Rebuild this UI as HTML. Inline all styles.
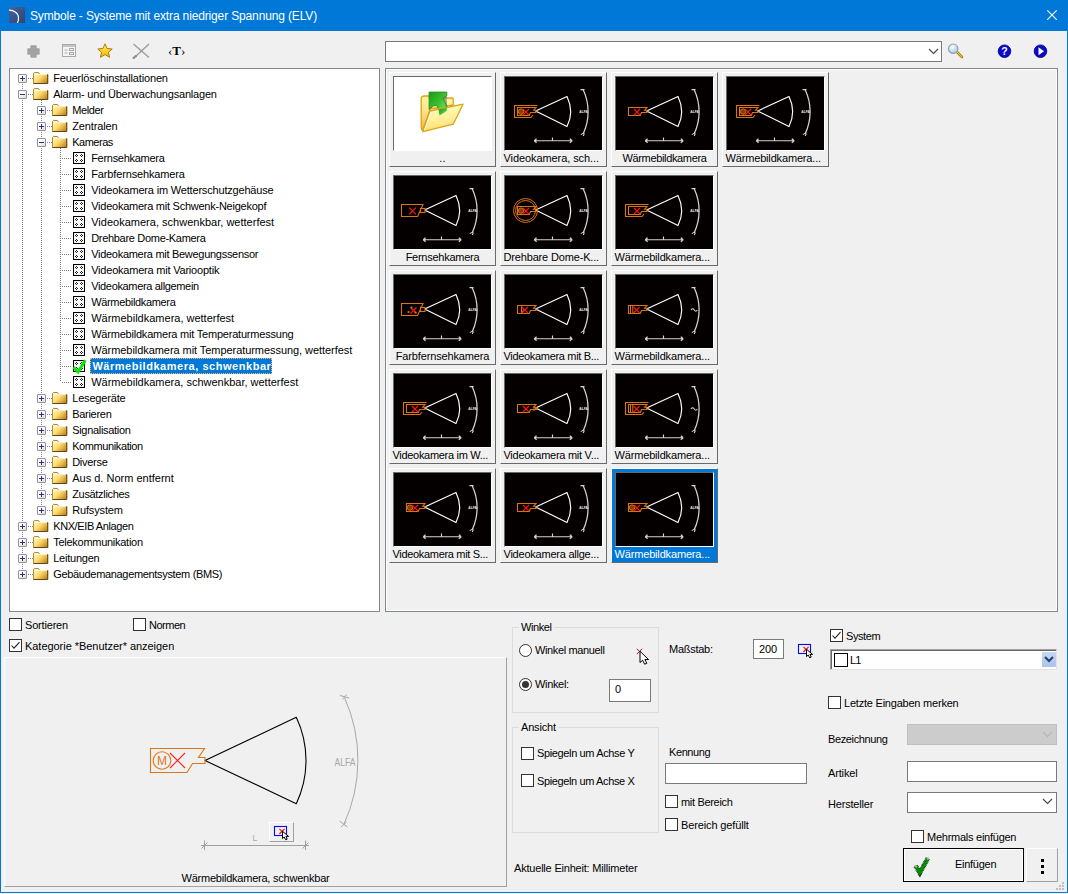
<!DOCTYPE html>
<html lang="de"><head><meta charset="utf-8"><title>Symbole - Systeme mit extra niedriger Spannung (ELV)</title>
<style>
html,body{margin:0;padding:0}
body{width:1068px;height:894px;position:relative;overflow:hidden;background:#f0f0f0;font:11px/16px "Liberation Sans",sans-serif;color:#000;-webkit-font-smoothing:auto}
.abs{position:absolute}
#frame{position:absolute;left:0;top:0;width:1066px;height:892px;border:1px solid #0078d7;border-top:none;pointer-events:none}
#title{position:absolute;left:0;top:0;width:1068px;height:31px;background:#0078d7;color:#fff;font:12px/31px "Liberation Sans",sans-serif}
#title span{position:absolute;left:30px;top:1px;white-space:nowrap;letter-spacing:0px}
.t{position:absolute;white-space:nowrap;height:16px;line-height:16px}
.box{position:absolute;background:#fff;border:1px solid #828790;box-sizing:border-box}
.row{position:absolute;left:0;height:16px;white-space:nowrap}
.lbl{position:absolute;top:0;height:16px;line-height:16px;white-space:nowrap;padding:0 2px 0 1.2px}
.vd{position:absolute;width:1px;background:repeating-linear-gradient(to bottom,#808080 0 1px,transparent 1px 2px)}
.hd{position:absolute;height:1px;background:repeating-linear-gradient(to right,#808080 0 1px,transparent 1px 2px)}
.pm{position:absolute;width:9px;height:9px;box-sizing:border-box;border:1px solid #919191;background:linear-gradient(135deg,#fff 30%,#dcdcdc);border-radius:1px}
.pm i{position:absolute;left:1px;top:3px;width:5px;height:1px;background:#26347a}
.pm b{position:absolute;left:3px;top:1px;width:1px;height:5px;background:#26347a}
.cb{position:absolute;width:13px;height:13px;box-sizing:border-box;border:1px solid #333;background:#fff}
.cell{position:absolute;width:107px;height:95px;box-sizing:border-box;border:1px solid;border-color:#fff #696969 #696969 #fff;background:#f0f0f0}
.cell .im{position:absolute;left:3px;top:3px;width:99px;height:75px;box-sizing:border-box;border:1px solid;border-color:#696969 #fff #fff #696969;background:#050000;overflow:hidden}
.cell .cap{position:absolute;left:3px;top:78px;width:99px;height:14px;line-height:14px;text-align:center;white-space:nowrap}
.cell.sel{background:#0078d7;color:#fff}
.grp{position:absolute;box-sizing:border-box;border:1px solid #dcdcdc}
.grp span{position:absolute;left:6px;top:-9px;background:#f0f0f0;padding:0 2px;line-height:16px;height:16px;white-space:nowrap}
.edit{position:absolute;box-sizing:border-box;border:1px solid #7a7a7a;background:#fff}
</style></head><body>
<div id="title"><svg class="abs" style="left:9px;top:7px" width="16" height="16" viewBox="0 0 16 16"><defs><linearGradient id="ig" x1="0" y1="0" x2="1" y2="1"><stop offset="0" stop-color="#48629c"/><stop offset="1" stop-color="#2c4474"/></linearGradient></defs><rect width="16" height="16" fill="url(#ig)"/><path d="M0 3.2 C4 3.1 9.6 5.6 9.5 11 C9.5 13 9.1 14.6 8.4 15.9" fill="none" stroke="#fff" stroke-width="1.15"/></svg><span style="letter-spacing:-0.146px;">Symbole - Systeme mit extra niedriger Spannung (ELV)</span><svg class="abs" style="left:1047px;top:10px" width="10" height="10" viewBox="0 0 10 10"><path d="M0.3 0.3 L9.7 9.7 M9.7 0.3 L0.3 9.7" stroke="#fff" stroke-width="1.1" fill="none"/></svg></div><svg class="abs" style="left:27px;top:45px" width="13" height="13" viewBox="0 0 13 13"><path d="M4 1h5v3h3v5h-3v3h-5v-3h-3v-5h3z" fill="#a2a2a2" stroke="#a2a2a2" stroke-width="1.4" stroke-linejoin="round"/></svg>
<svg class="abs" style="left:62px;top:44px" width="14" height="13" viewBox="0 0 14 13"><rect x="0.5" y="0.5" width="13" height="12" fill="#f6f6f6" stroke="#a8a8a8"/><rect x="1" y="1" width="12" height="2" fill="#c4c4c4"/><path d="M2.5 6h3M2.5 9h3" stroke="#a8a8a8"/><rect x="7.5" y="4.5" width="4" height="2" fill="none" stroke="#a8a8a8"/><rect x="7.5" y="8.5" width="4" height="2" fill="none" stroke="#a8a8a8"/></svg>
<svg class="abs" style="left:97px;top:43px" width="16" height="15" viewBox="0 0 16 15"><defs><linearGradient id="sg" x1="0" y1="0" x2="0" y2="1"><stop offset="0" stop-color="#fff36a"/><stop offset="1" stop-color="#f8b400"/></linearGradient></defs><path d="M8 0.8 L10.1 5.5 L15.2 6 L11.4 9.3 L12.6 14.3 L8 11.6 L3.4 14.3 L4.6 9.3 L0.8 6 L5.9 5.5 Z" fill="url(#sg)" stroke="#b07a00" stroke-width="1" stroke-linejoin="round"/></svg>
<svg class="abs" style="left:132px;top:43px" width="19" height="16" viewBox="0 0 19 16"><path d="M1.5 1 L17 14.5 M17 1 L3.5 13.5" stroke="#9a9a9a" stroke-width="1.3" fill="none"/><path d="M3.8 13.2 L1.6 15" stroke="#8a8a8a" stroke-width="2.2" stroke-linecap="round"/></svg>
<div class="t" style="left:168px;top:43px;font:bold 13px/16px 'Liberation Serif',serif"><span style="font-weight:normal">&#8249;</span>T<span style="font-weight:normal">&#8250;</span></div>
<div class="edit" style="left:385px;top:41px;width:557px;height:21px"></div><svg class="abs" style="left:928px;top:48px" width="11" height="7" viewBox="0 0 11 7"><path d="M1 1 L5.5 5.5 L10 1" fill="none" stroke="#444" stroke-width="1.1"/></svg><svg class="abs" style="left:947px;top:43px" width="17" height="16" viewBox="0 0 17 16"><defs><radialGradient id="mg" cx="0.4" cy="0.35" r="0.7"><stop offset="0" stop-color="#fff"/><stop offset="1" stop-color="#9ec4e4"/></radialGradient></defs><path d="M9.5 8.5 L15 14" stroke="#b8860b" stroke-width="2.6" stroke-linecap="round"/><path d="M10 9 L15 14" stroke="#f0c850" stroke-width="1" stroke-linecap="round"/><circle cx="6.2" cy="5.7" r="4.7" fill="url(#mg)" stroke="#8aa4bc" stroke-width="1.2"/></svg>
<svg class="abs" style="left:997px;top:44px" width="15" height="15" viewBox="0 0 15 15"><circle cx="7.5" cy="7.2" r="6.3" fill="#0a0ac8"/><circle cx="7.5" cy="7.2" r="6.3" fill="none" stroke="#00008a" stroke-width="0.8"/><text x="7.5" y="11" text-anchor="middle" font-family="Liberation Sans, sans-serif" font-weight="bold" font-size="10.5" fill="#fff">?</text></svg>
<svg class="abs" style="left:1033px;top:44px" width="15" height="15" viewBox="0 0 15 15"><circle cx="7.5" cy="7.2" r="6.3" fill="#0a0ac8"/><circle cx="7.5" cy="7.2" r="6.3" fill="none" stroke="#00008a" stroke-width="0.8"/><path d="M5.5 3.2 L11 7.2 L5.5 11.2 Z" fill="#fff"/></svg>
<svg width="0" height="0" style="position:absolute"><defs>
<linearGradient id="fg" x1="0" y1="0.1" x2="1" y2="0.9"><stop offset="0" stop-color="#fff8c8"/><stop offset="0.45" stop-color="#ffdc72"/><stop offset="1" stop-color="#c07f14"/></linearGradient>
<symbol id="fold" viewBox="0 0 16 16"><path d="M0.5 13.5 V3.2 l0.8 -0.7 h4.2 l1.2 2 h8 v9 z" fill="url(#fg)" stroke="#b08c38" stroke-width="1"/><path d="M0.5 13.5 h14.2 v-9" fill="none" stroke="#5e4412" stroke-width="1"/><path d="M1.5 4.5h12.5" stroke="#fffbe0" stroke-width="1" opacity=".9"/></symbol>
<symbol id="leaf" viewBox="0 0 12 12"><rect x="0.5" y="0.5" width="11" height="11" fill="#fff" stroke="#000" stroke-width="1.1"/><path d="M3 2h1v1h-1z M2 3h1v1h-1z M4 3h1v1h-1z M3 4h1v1h-1z M8 2h1v1h-1z M7 3h1v1h-1z M9 3h1v1h-1z M8 4h1v1h-1z M3 7h1v1h-1z M2 8h1v1h-1z M4 8h1v1h-1z M3 9h1v1h-1z M8 7h1v1h-1z M7 8h1v1h-1z M9 8h1v1h-1z M8 9h1v1h-1z" fill="#222" shape-rendering="crispEdges"/></symbol>
</defs></svg><div class="box" style="left:9px;top:68px;width:371px;height:544px"></div><div class="vd" style="left:22px;top:78px;height:496px"></div><div class="vd" style="left:41px;top:100px;height:410px"></div><div class="vd" style="left:60px;top:148px;height:234px"></div><div class="row" style="top:70px"><div class="hd" style="left:28px;top:8px;width:5px"></div><div class="pm" style="left:18px;top:4px"><i></i><b></b></div><svg class="abs" style="left:33px;top:0" width="16" height="16"><use href="#fold"/></svg><div class="lbl" style="left:52px;letter-spacing:-0.168px;">Feuerlöschinstallationen</div></div>
<div class="row" style="top:86px"><div class="hd" style="left:28px;top:8px;width:5px"></div><div class="pm" style="left:18px;top:4px"><i></i></div><svg class="abs" style="left:33px;top:0" width="16" height="16"><use href="#fold"/></svg><div class="lbl" style="left:52px;letter-spacing:-0.193px;">Alarm- und Überwachungsanlagen</div></div>
<div class="row" style="top:102px"><div class="hd" style="left:47px;top:8px;width:5px"></div><div class="pm" style="left:37px;top:4px"><i></i><b></b></div><svg class="abs" style="left:52px;top:0" width="16" height="16"><use href="#fold"/></svg><div class="lbl" style="left:71px;letter-spacing:-0.387px;">Melder</div></div>
<div class="row" style="top:118px"><div class="hd" style="left:47px;top:8px;width:5px"></div><div class="pm" style="left:37px;top:4px"><i></i><b></b></div><svg class="abs" style="left:52px;top:0" width="16" height="16"><use href="#fold"/></svg><div class="lbl" style="left:71px;letter-spacing:-0.132px;">Zentralen</div></div>
<div class="row" style="top:134px"><div class="hd" style="left:47px;top:8px;width:5px"></div><div class="pm" style="left:37px;top:4px"><i></i></div><svg class="abs" style="left:52px;top:0" width="16" height="16"><use href="#fold"/></svg><div class="lbl" style="left:71px;letter-spacing:-0.490px;">Kameras</div></div>
<div class="row" style="top:150px"><div class="hd" style="left:62px;top:8px;width:9px"></div><svg class="abs" style="left:73px;top:2px" width="12" height="12"><use href="#leaf"/></svg><div class="lbl" style="left:90px;letter-spacing:-0.288px;">Fernsehkamera</div></div>
<div class="row" style="top:166px"><div class="hd" style="left:62px;top:8px;width:9px"></div><svg class="abs" style="left:73px;top:2px" width="12" height="12"><use href="#leaf"/></svg><div class="lbl" style="left:90px;letter-spacing:-0.141px;">Farbfernsehkamera</div></div>
<div class="row" style="top:182px"><div class="hd" style="left:62px;top:8px;width:9px"></div><svg class="abs" style="left:73px;top:2px" width="12" height="12"><use href="#leaf"/></svg><div class="lbl" style="left:90px;letter-spacing:-0.183px;">Videokamera im Wetterschutzgehäuse</div></div>
<div class="row" style="top:198px"><div class="hd" style="left:62px;top:8px;width:9px"></div><svg class="abs" style="left:73px;top:2px" width="12" height="12"><use href="#leaf"/></svg><div class="lbl" style="left:90px;letter-spacing:-0.249px;">Videokamera mit Schwenk-Neigekopf</div></div>
<div class="row" style="top:214px"><div class="hd" style="left:62px;top:8px;width:9px"></div><svg class="abs" style="left:73px;top:2px" width="12" height="12"><use href="#leaf"/></svg><div class="lbl" style="left:90px;letter-spacing:0.011px;">Videokamera, schwenkbar, wetterfest</div></div>
<div class="row" style="top:230px"><div class="hd" style="left:62px;top:8px;width:9px"></div><svg class="abs" style="left:73px;top:2px" width="12" height="12"><use href="#leaf"/></svg><div class="lbl" style="left:90px;letter-spacing:-0.307px;">Drehbare Dome-Kamera</div></div>
<div class="row" style="top:246px"><div class="hd" style="left:62px;top:8px;width:9px"></div><svg class="abs" style="left:73px;top:2px" width="12" height="12"><use href="#leaf"/></svg><div class="lbl" style="left:90px;letter-spacing:-0.287px;">Videokamera mit Bewegungssensor</div></div>
<div class="row" style="top:262px"><div class="hd" style="left:62px;top:8px;width:9px"></div><svg class="abs" style="left:73px;top:2px" width="12" height="12"><use href="#leaf"/></svg><div class="lbl" style="left:90px;letter-spacing:-0.212px;">Videokamera mit Variooptik</div></div>
<div class="row" style="top:278px"><div class="hd" style="left:62px;top:8px;width:9px"></div><svg class="abs" style="left:73px;top:2px" width="12" height="12"><use href="#leaf"/></svg><div class="lbl" style="left:90px;letter-spacing:-0.341px;">Videokamera allgemein</div></div>
<div class="row" style="top:294px"><div class="hd" style="left:62px;top:8px;width:9px"></div><svg class="abs" style="left:73px;top:2px" width="12" height="12"><use href="#leaf"/></svg><div class="lbl" style="left:90px;letter-spacing:-0.330px;">Wärmebildkamera</div></div>
<div class="row" style="top:310px"><div class="hd" style="left:62px;top:8px;width:9px"></div><svg class="abs" style="left:73px;top:2px" width="12" height="12"><use href="#leaf"/></svg><div class="lbl" style="left:90px;letter-spacing:-0.002px;">Wärmebildkamera, wetterfest</div></div>
<div class="row" style="top:326px"><div class="hd" style="left:62px;top:8px;width:9px"></div><svg class="abs" style="left:73px;top:2px" width="12" height="12"><use href="#leaf"/></svg><div class="lbl" style="left:90px;letter-spacing:-0.211px;">Wärmebildkamera mit Temperaturmessung</div></div>
<div class="row" style="top:342px"><div class="hd" style="left:62px;top:8px;width:9px"></div><svg class="abs" style="left:73px;top:2px" width="12" height="12"><use href="#leaf"/></svg><div class="lbl" style="left:90px;letter-spacing:-0.059px;">Wärmebildkamera mit Temperaturmessung, wetterfest</div></div>
<div class="row" style="top:358px"><div class="hd" style="left:62px;top:8px;width:9px"></div><svg class="abs" style="left:73px;top:2px" width="12" height="12"><use href="#leaf"/></svg><svg class="abs" style="left:71px;top:0" width="16" height="16" viewBox="0 0 16 16"><path d="M2.6 9.2 L7 14 L14.4 2.2" fill="none" stroke="#00ee00" stroke-width="3" stroke-linejoin="miter"/></svg><div class="lbl" style="left:90px;width:178px;padding:0 2px 0 2.4px;background:#0078d7;color:#fff;font-weight:bold;outline:1px dotted #ffb060;outline-offset:-1px;letter-spacing:0.538px;">Wärmebildkamera, schwenkbar</div></div>
<div class="row" style="top:374px"><div class="hd" style="left:62px;top:8px;width:9px"></div><svg class="abs" style="left:73px;top:2px" width="12" height="12"><use href="#leaf"/></svg><div class="lbl" style="left:90px;letter-spacing:-0.006px;">Wärmebildkamera, schwenkbar, wetterfest</div></div>
<div class="row" style="top:390px"><div class="hd" style="left:47px;top:8px;width:5px"></div><div class="pm" style="left:37px;top:4px"><i></i><b></b></div><svg class="abs" style="left:52px;top:0" width="16" height="16"><use href="#fold"/></svg><div class="lbl" style="left:71px;letter-spacing:-0.175px;">Lesegeräte</div></div>
<div class="row" style="top:406px"><div class="hd" style="left:47px;top:8px;width:5px"></div><div class="pm" style="left:37px;top:4px"><i></i><b></b></div><svg class="abs" style="left:52px;top:0" width="16" height="16"><use href="#fold"/></svg><div class="lbl" style="left:71px;letter-spacing:-0.285px;">Barieren</div></div>
<div class="row" style="top:422px"><div class="hd" style="left:47px;top:8px;width:5px"></div><div class="pm" style="left:37px;top:4px"><i></i><b></b></div><svg class="abs" style="left:52px;top:0" width="16" height="16"><use href="#fold"/></svg><div class="lbl" style="left:71px;letter-spacing:-0.313px;">Signalisation</div></div>
<div class="row" style="top:438px"><div class="hd" style="left:47px;top:8px;width:5px"></div><div class="pm" style="left:37px;top:4px"><i></i><b></b></div><svg class="abs" style="left:52px;top:0" width="16" height="16"><use href="#fold"/></svg><div class="lbl" style="left:71px;letter-spacing:-0.402px;">Kommunikation</div></div>
<div class="row" style="top:454px"><div class="hd" style="left:47px;top:8px;width:5px"></div><div class="pm" style="left:37px;top:4px"><i></i><b></b></div><svg class="abs" style="left:52px;top:0" width="16" height="16"><use href="#fold"/></svg><div class="lbl" style="left:71px;letter-spacing:-0.285px;">Diverse</div></div>
<div class="row" style="top:470px"><div class="hd" style="left:47px;top:8px;width:5px"></div><div class="pm" style="left:37px;top:4px"><i></i><b></b></div><svg class="abs" style="left:52px;top:0" width="16" height="16"><use href="#fold"/></svg><div class="lbl" style="left:71px;letter-spacing:0.005px;">Aus d. Norm entfernt</div></div>
<div class="row" style="top:486px"><div class="hd" style="left:47px;top:8px;width:5px"></div><div class="pm" style="left:37px;top:4px"><i></i><b></b></div><svg class="abs" style="left:52px;top:0" width="16" height="16"><use href="#fold"/></svg><div class="lbl" style="left:71px;letter-spacing:-0.320px;">Zusätzliches</div></div>
<div class="row" style="top:502px"><div class="hd" style="left:47px;top:8px;width:5px"></div><div class="pm" style="left:37px;top:4px"><i></i><b></b></div><svg class="abs" style="left:52px;top:0" width="16" height="16"><use href="#fold"/></svg><div class="lbl" style="left:71px;letter-spacing:-0.152px;">Rufsystem</div></div>
<div class="row" style="top:518px"><div class="hd" style="left:28px;top:8px;width:5px"></div><div class="pm" style="left:18px;top:4px"><i></i><b></b></div><svg class="abs" style="left:33px;top:0" width="16" height="16"><use href="#fold"/></svg><div class="lbl" style="left:52px;letter-spacing:-0.396px;">KNX/EIB Anlagen</div></div>
<div class="row" style="top:534px"><div class="hd" style="left:28px;top:8px;width:5px"></div><div class="pm" style="left:18px;top:4px"><i></i><b></b></div><svg class="abs" style="left:33px;top:0" width="16" height="16"><use href="#fold"/></svg><div class="lbl" style="left:52px;letter-spacing:-0.268px;">Telekommunikation</div></div>
<div class="row" style="top:550px"><div class="hd" style="left:28px;top:8px;width:5px"></div><div class="pm" style="left:18px;top:4px"><i></i><b></b></div><svg class="abs" style="left:33px;top:0" width="16" height="16"><use href="#fold"/></svg><div class="lbl" style="left:52px;letter-spacing:-0.225px;">Leitungen</div></div>
<div class="row" style="top:566px"><div class="hd" style="left:28px;top:8px;width:5px"></div><div class="pm" style="left:18px;top:4px"><i></i><b></b></div><svg class="abs" style="left:33px;top:0" width="16" height="16"><use href="#fold"/></svg><div class="lbl" style="left:52px;letter-spacing:-0.329px;">Gebäudemanagementsystem (BMS)</div></div>
<div class="box" style="left:385px;top:68px;width:673px;height:544px;background:#f0f0f0;box-shadow:inset 0 0 0 1px #fff"></div>
<div class="cell" style="left:389px;top:72px"><div class="im" style="background:#fff"><svg class="abs" style="left:26px;top:14px" width="46" height="44" viewBox="0 0 46 44"><defs><linearGradient id="ub" x1="0.6" y1="0" x2="0.2" y2="1"><stop offset="0" stop-color="#fff6a8"/><stop offset="0.5" stop-color="#ffe68a"/><stop offset="1" stop-color="#f4bc50"/></linearGradient><linearGradient id="uf" x1="0.3" y1="0" x2="0.5" y2="1"><stop offset="0" stop-color="#fffbd0"/><stop offset="0.5" stop-color="#fff29a"/><stop offset="1" stop-color="#ffd870"/></linearGradient><linearGradient id="ug" x1="0" y1="0" x2="1" y2="1"><stop offset="0" stop-color="#169a16"/><stop offset="0.5" stop-color="#3cc030"/><stop offset="1" stop-color="#8cf468"/></linearGradient></defs>
<path d="M1.2 8 q0 -3 3 -3 h5 v2 h17.5 l0 0 h5.5 q1 0 1 1 v6 l-23 4 l-7.5 21.5 q-1.5 -1 -1.5 -3 z" fill="url(#ub)" stroke="#dca416" stroke-width="1.3" stroke-linejoin="round"/>
<path d="M9.1 1.1 H26.8 V4.8 L22.9 7.1 L24.9 11.1 L26.8 14.5 V19.9 L19.5 24.6 L18.9 18.5 L16.8 14.5 L13.5 14.8 L9.1 18.5 Z" fill="url(#ug)" stroke="#2a8a2a" stroke-width="0.9" stroke-linejoin="round"/>
<path d="M22.9 7.1 L26.8 4.8 V19.9 L19.5 24.6 L21 22 L25 19 L25.5 13 Z" fill="#3a7a4a" opacity=".55"/>
<path d="M10 20 L43 13.2 L33.2 33.2 L2.9 40.6 Z" fill="url(#uf)" stroke="#dca416" stroke-width="1.3" stroke-linejoin="round"/>
<path d="M18.5 18.6 L19.5 24.6 L26.8 19.9 V16.8 Z" fill="url(#ug)"/>
<path d="M11 21 L4.3 39.3" stroke="#fffef0" stroke-width="1"/>
</svg></div><div class="cap" style="letter-spacing:0.188px;">..</div></div>
<div class="cell" style="left:500px;top:72px"><div class="im"><svg class="abs" style="left:0;top:0" width="97" height="73" viewBox="0 0 97 73"><path d="M30.6 34 L62 19.4 A34.5 34.5 0 0 1 62 49.6 Z" fill="none" stroke="#ffffff" stroke-width="1.15" stroke-linejoin="round"/><path d="M78.2 12.8 A51.8 51.8 0 0 1 78.2 56.8" fill="none" stroke="#d4d4d4" stroke-width="1.25"/><path d="M75.5 12.6 h4 M75.8 57.6 l3.4 -2 M78.2 59 l1.2 -2.6" stroke="#d4d4d4" stroke-width="1.1" fill="none"/><text x="74.3" y="36.2" font-family="Liberation Sans, sans-serif" font-size="4.4" font-weight="bold" fill="#f0f0f0" textLength="8.6" lengthAdjust="spacingAndGlyphs">ALFA</text><path d="M29.6 63.7 H66.6 M30.8 61.8 v3.8 M65.8 61.8 v3.8 M29.2 63.7 l2.4 -2 M29.2 63.7 l2.4 2 M67.2 63.7 l-2.4 -2 M67.2 63.7 l-2.4 2 M47.5 60.4 v3.3" stroke="#d4d4d4" stroke-width="1.15" fill="none"/><path d="M32.5 28.5 H9.5 V40.5 H26 L28 38" fill="none" stroke="#dc7410" stroke-width="1.1"/><path d="M12.5 30.5 H31 L28.6 33.2 H31 V35.5 H25.5 L24.3 38.5 H12.5 Z" fill="none" stroke="#dc7410" stroke-width="1.1"/><circle cx="16" cy="34.6" r="2.7" fill="#7a4008" stroke="#dc7410"/><path d="M18.0 32.0 L24.0 38.0 M24.0 32.0 L18.0 38.0" stroke="#ff1414" stroke-width="1.2"/></svg></div><div class="cap" style="text-align:left;left:2.5px;letter-spacing:-0.080px;">Videokamera, sch...</div></div>
<div class="cell" style="left:611px;top:72px"><div class="im"><svg class="abs" style="left:0;top:0" width="97" height="73" viewBox="0 0 97 73"><path d="M30.6 34 L62 19.4 A34.5 34.5 0 0 1 62 49.6 Z" fill="none" stroke="#ffffff" stroke-width="1.15" stroke-linejoin="round"/><path d="M78.2 12.8 A51.8 51.8 0 0 1 78.2 56.8" fill="none" stroke="#d4d4d4" stroke-width="1.25"/><path d="M75.5 12.6 h4 M75.8 57.6 l3.4 -2 M78.2 59 l1.2 -2.6" stroke="#d4d4d4" stroke-width="1.1" fill="none"/><text x="74.3" y="36.2" font-family="Liberation Sans, sans-serif" font-size="4.4" font-weight="bold" fill="#f0f0f0" textLength="8.6" lengthAdjust="spacingAndGlyphs">ALFA</text><path d="M29.6 63.7 H66.6 M30.8 61.8 v3.8 M65.8 61.8 v3.8 M29.2 63.7 l2.4 -2 M29.2 63.7 l2.4 2 M67.2 63.7 l-2.4 -2 M67.2 63.7 l-2.4 2 M47.5 60.4 v3.3" stroke="#d4d4d4" stroke-width="1.15" fill="none"/><path d="M12.5 30.5 H31 L28.6 33.2 H31 V35.5 H25.5 L24.3 38.5 H12.5 Z" fill="none" stroke="#dc7410" stroke-width="1.1"/><path d="M18.0 32.0 L24.0 38.0 M24.0 32.0 L18.0 38.0" stroke="#ff1414" stroke-width="1.2"/></svg></div><div class="cap" style="letter-spacing:-0.350px;">Wärmebildkamera</div></div>
<div class="cell" style="left:722px;top:72px"><div class="im"><svg class="abs" style="left:0;top:0" width="97" height="73" viewBox="0 0 97 73"><path d="M30.6 34 L62 19.4 A34.5 34.5 0 0 1 62 49.6 Z" fill="none" stroke="#ffffff" stroke-width="1.15" stroke-linejoin="round"/><path d="M78.2 12.8 A51.8 51.8 0 0 1 78.2 56.8" fill="none" stroke="#d4d4d4" stroke-width="1.25"/><path d="M75.5 12.6 h4 M75.8 57.6 l3.4 -2 M78.2 59 l1.2 -2.6" stroke="#d4d4d4" stroke-width="1.1" fill="none"/><text x="74.3" y="36.2" font-family="Liberation Sans, sans-serif" font-size="4.4" font-weight="bold" fill="#f0f0f0" textLength="8.6" lengthAdjust="spacingAndGlyphs">ALFA</text><path d="M29.6 63.7 H66.6 M30.8 61.8 v3.8 M65.8 61.8 v3.8 M29.2 63.7 l2.4 -2 M29.2 63.7 l2.4 2 M67.2 63.7 l-2.4 -2 M67.2 63.7 l-2.4 2 M47.5 60.4 v3.3" stroke="#d4d4d4" stroke-width="1.15" fill="none"/><path d="M32.5 28.5 H9.5 V40.5 H26 L28 38" fill="none" stroke="#dc7410" stroke-width="1.1"/><path d="M12.5 30.5 H31 L28.6 33.2 H31 V35.5 H25.5 L24.3 38.5 H12.5 Z" fill="none" stroke="#dc7410" stroke-width="1.1"/><circle cx="16" cy="34.6" r="2.7" fill="#7a4008" stroke="#dc7410"/><path d="M18.0 32.0 L24.0 38.0 M24.0 32.0 L18.0 38.0" stroke="#ff1414" stroke-width="1.2"/></svg></div><div class="cap" style="text-align:left;left:2.5px;letter-spacing:-0.162px;">Wärmebildkamera...</div></div>
<div class="cell" style="left:389px;top:171px"><div class="im"><svg class="abs" style="left:0;top:0" width="97" height="73" viewBox="0 0 97 73"><path d="M30.6 34 L62 19.4 A34.5 34.5 0 0 1 62 49.6 Z" fill="none" stroke="#ffffff" stroke-width="1.15" stroke-linejoin="round"/><path d="M78.2 12.8 A51.8 51.8 0 0 1 78.2 56.8" fill="none" stroke="#d4d4d4" stroke-width="1.25"/><path d="M75.5 12.6 h4 M75.8 57.6 l3.4 -2 M78.2 59 l1.2 -2.6" stroke="#d4d4d4" stroke-width="1.1" fill="none"/><text x="74.3" y="36.2" font-family="Liberation Sans, sans-serif" font-size="4.4" font-weight="bold" fill="#f0f0f0" textLength="8.6" lengthAdjust="spacingAndGlyphs">ALFA</text><path d="M29.6 63.7 H66.6 M30.8 61.8 v3.8 M65.8 61.8 v3.8 M29.2 63.7 l2.4 -2 M29.2 63.7 l2.4 2 M67.2 63.7 l-2.4 -2 M67.2 63.7 l-2.4 2 M47.5 60.4 v3.3" stroke="#d4d4d4" stroke-width="1.15" fill="none"/><path d="M7.5 28.5 H29 L23.6 40.5 H7.5 Z" fill="none" stroke="#dc7410" stroke-width="1.1"/><rect x="26.5" y="32.5" width="4.5" height="4" fill="#050000" stroke="#dc7410" stroke-width="1.1"/><path d="M15.2 31.7 L21.8 38.3 M21.8 31.7 L15.2 38.3" stroke="#ff1414" stroke-width="1.2"/></svg></div><div class="cap" style="letter-spacing:-0.254px;">Fernsehkamera</div></div>
<div class="cell" style="left:500px;top:171px"><div class="im"><svg class="abs" style="left:0;top:0" width="97" height="73" viewBox="0 0 97 73"><path d="M30.6 34 L62 19.4 A34.5 34.5 0 0 1 62 49.6 Z" fill="none" stroke="#ffffff" stroke-width="1.15" stroke-linejoin="round"/><path d="M78.2 12.8 A51.8 51.8 0 0 1 78.2 56.8" fill="none" stroke="#d4d4d4" stroke-width="1.25"/><path d="M75.5 12.6 h4 M75.8 57.6 l3.4 -2 M78.2 59 l1.2 -2.6" stroke="#d4d4d4" stroke-width="1.1" fill="none"/><text x="74.3" y="36.2" font-family="Liberation Sans, sans-serif" font-size="4.4" font-weight="bold" fill="#f0f0f0" textLength="8.6" lengthAdjust="spacingAndGlyphs">ALFA</text><path d="M29.6 63.7 H66.6 M30.8 61.8 v3.8 M65.8 61.8 v3.8 M29.2 63.7 l2.4 -2 M29.2 63.7 l2.4 2 M67.2 63.7 l-2.4 -2 M67.2 63.7 l-2.4 2 M47.5 60.4 v3.3" stroke="#d4d4d4" stroke-width="1.15" fill="none"/><circle cx="20.5" cy="34.5" r="12" fill="none" stroke="#dc7410"/><circle cx="20.5" cy="34.5" r="10" fill="none" stroke="#dc7410"/><path d="M12.5 30.5 H31 L28.6 33.2 H31 V35.5 H25.5 L24.3 38.5 H12.5 Z" fill="none" stroke="#dc7410" stroke-width="1.1"/><circle cx="16" cy="34.6" r="2.7" fill="#7a4008" stroke="#dc7410"/><path d="M18.0 32.0 L24.0 38.0 M24.0 32.0 L18.0 38.0" stroke="#ff1414" stroke-width="1.2"/></svg></div><div class="cap" style="text-align:left;left:2.5px;letter-spacing:-0.163px;">Drehbare Dome-K...</div></div>
<div class="cell" style="left:611px;top:171px"><div class="im"><svg class="abs" style="left:0;top:0" width="97" height="73" viewBox="0 0 97 73"><path d="M30.6 34 L62 19.4 A34.5 34.5 0 0 1 62 49.6 Z" fill="none" stroke="#ffffff" stroke-width="1.15" stroke-linejoin="round"/><path d="M78.2 12.8 A51.8 51.8 0 0 1 78.2 56.8" fill="none" stroke="#d4d4d4" stroke-width="1.25"/><path d="M75.5 12.6 h4 M75.8 57.6 l3.4 -2 M78.2 59 l1.2 -2.6" stroke="#d4d4d4" stroke-width="1.1" fill="none"/><text x="74.3" y="36.2" font-family="Liberation Sans, sans-serif" font-size="4.4" font-weight="bold" fill="#f0f0f0" textLength="8.6" lengthAdjust="spacingAndGlyphs">ALFA</text><path d="M29.6 63.7 H66.6 M30.8 61.8 v3.8 M65.8 61.8 v3.8 M29.2 63.7 l2.4 -2 M29.2 63.7 l2.4 2 M67.2 63.7 l-2.4 -2 M67.2 63.7 l-2.4 2 M47.5 60.4 v3.3" stroke="#d4d4d4" stroke-width="1.15" fill="none"/><path d="M32.5 28.5 H9.5 V40.5 H26 L28 38" fill="none" stroke="#dc7410" stroke-width="1.1"/><path d="M12.5 30.5 H31 L28.6 33.2 H31 V35.5 H25.5 L24.3 38.5 H12.5 Z" fill="none" stroke="#dc7410" stroke-width="1.1"/><path d="M18.0 32.0 L24.0 38.0 M24.0 32.0 L18.0 38.0" stroke="#ff1414" stroke-width="1.2"/></svg></div><div class="cap" style="text-align:left;left:2.5px;letter-spacing:-0.162px;">Wärmebildkamera...</div></div>
<div class="cell" style="left:389px;top:270px"><div class="im"><svg class="abs" style="left:0;top:0" width="97" height="73" viewBox="0 0 97 73"><path d="M30.6 34 L62 19.4 A34.5 34.5 0 0 1 62 49.6 Z" fill="none" stroke="#ffffff" stroke-width="1.15" stroke-linejoin="round"/><path d="M78.2 12.8 A51.8 51.8 0 0 1 78.2 56.8" fill="none" stroke="#d4d4d4" stroke-width="1.25"/><path d="M75.5 12.6 h4 M75.8 57.6 l3.4 -2 M78.2 59 l1.2 -2.6" stroke="#d4d4d4" stroke-width="1.1" fill="none"/><text x="74.3" y="36.2" font-family="Liberation Sans, sans-serif" font-size="4.4" font-weight="bold" fill="#f0f0f0" textLength="8.6" lengthAdjust="spacingAndGlyphs">ALFA</text><path d="M29.6 63.7 H66.6 M30.8 61.8 v3.8 M65.8 61.8 v3.8 M29.2 63.7 l2.4 -2 M29.2 63.7 l2.4 2 M67.2 63.7 l-2.4 -2 M67.2 63.7 l-2.4 2 M47.5 60.4 v3.3" stroke="#d4d4d4" stroke-width="1.15" fill="none"/><path d="M7.5 28.5 H29 L23.6 40.5 H7.5 Z" fill="none" stroke="#dc7410" stroke-width="1.1"/><rect x="26.5" y="32.5" width="4.5" height="4" fill="#050000" stroke="#dc7410" stroke-width="1.1"/><path d="M16.5 32.5 L22.5 38.5 M22.5 32.5 L16.5 38.5" stroke="#ff1414" stroke-width="1.2"/><circle cx="14.5" cy="37" r="1.1" fill="#dc7410"/><circle cx="17.5" cy="32.5" r="1.1" fill="#dc7410"/><circle cx="21.5" cy="37.5" r="1.1" fill="#dc7410"/></svg></div><div class="cap" style="letter-spacing:-0.147px;">Farbfernsehkamera</div></div>
<div class="cell" style="left:500px;top:270px"><div class="im"><svg class="abs" style="left:0;top:0" width="97" height="73" viewBox="0 0 97 73"><path d="M30.6 34 L62 19.4 A34.5 34.5 0 0 1 62 49.6 Z" fill="none" stroke="#ffffff" stroke-width="1.15" stroke-linejoin="round"/><path d="M78.2 12.8 A51.8 51.8 0 0 1 78.2 56.8" fill="none" stroke="#d4d4d4" stroke-width="1.25"/><path d="M75.5 12.6 h4 M75.8 57.6 l3.4 -2 M78.2 59 l1.2 -2.6" stroke="#d4d4d4" stroke-width="1.1" fill="none"/><text x="74.3" y="36.2" font-family="Liberation Sans, sans-serif" font-size="4.4" font-weight="bold" fill="#f0f0f0" textLength="8.6" lengthAdjust="spacingAndGlyphs">ALFA</text><path d="M29.6 63.7 H66.6 M30.8 61.8 v3.8 M65.8 61.8 v3.8 M29.2 63.7 l2.4 -2 M29.2 63.7 l2.4 2 M67.2 63.7 l-2.4 -2 M67.2 63.7 l-2.4 2 M47.5 60.4 v3.3" stroke="#d4d4d4" stroke-width="1.15" fill="none"/><path d="M12.5 30.5 H31 L28.6 33.2 H31 V35.5 H25.5 L24.3 38.5 H12.5 Z" fill="none" stroke="#dc7410" stroke-width="1.1"/><path d="M16.5 31.5 V37.5 L19 34.5 Z" stroke="#dc7410" fill="none"/><path d="M17.0 32.0 L23.0 38.0 M23.0 32.0 L17.0 38.0" stroke="#ff1414" stroke-width="1.2"/></svg></div><div class="cap" style="text-align:left;left:2.5px;letter-spacing:-0.320px;">Videokamera mit B...</div></div>
<div class="cell" style="left:611px;top:270px"><div class="im"><svg class="abs" style="left:0;top:0" width="97" height="73" viewBox="0 0 97 73"><path d="M30.6 34 L62 19.4 A34.5 34.5 0 0 1 62 49.6 Z" fill="none" stroke="#ffffff" stroke-width="1.15" stroke-linejoin="round"/><path d="M78.2 12.8 A51.8 51.8 0 0 1 78.2 56.8" fill="none" stroke="#d4d4d4" stroke-width="1.25"/><path d="M75.5 12.6 h4 M75.8 57.6 l3.4 -2 M78.2 59 l1.2 -2.6" stroke="#d4d4d4" stroke-width="1.1" fill="none"/><path d="M75 35 q1.6 -2.4 3.2 0 t3.2 0" stroke="#d4d4d4" stroke-width="1.1" fill="none"/><path d="M29.6 63.7 H66.6 M30.8 61.8 v3.8 M65.8 61.8 v3.8 M29.2 63.7 l2.4 -2 M29.2 63.7 l2.4 2 M67.2 63.7 l-2.4 -2 M67.2 63.7 l-2.4 2 M47.5 60.4 v3.3" stroke="#d4d4d4" stroke-width="1.15" fill="none"/><path d="M12.5 30.5 H31 L28.6 33.2 H31 V35.5 H25.5 L24.3 38.5 H12.5 Z" fill="none" stroke="#dc7410" stroke-width="1.1"/><path d="M14.5 30.5 V38.5 M16.8 31 V38" stroke="#dc7410" fill="none"/><path d="M17.5 32.0 L23.5 38.0 M23.5 32.0 L17.5 38.0" stroke="#ff1414" stroke-width="1.2"/></svg></div><div class="cap" style="text-align:left;left:2.5px;letter-spacing:-0.162px;">Wärmebildkamera...</div></div>
<div class="cell" style="left:389px;top:369px"><div class="im"><svg class="abs" style="left:0;top:0" width="97" height="73" viewBox="0 0 97 73"><path d="M30.6 34 L62 19.4 A34.5 34.5 0 0 1 62 49.6 Z" fill="none" stroke="#ffffff" stroke-width="1.15" stroke-linejoin="round"/><path d="M78.2 12.8 A51.8 51.8 0 0 1 78.2 56.8" fill="none" stroke="#d4d4d4" stroke-width="1.25"/><path d="M75.5 12.6 h4 M75.8 57.6 l3.4 -2 M78.2 59 l1.2 -2.6" stroke="#d4d4d4" stroke-width="1.1" fill="none"/><text x="74.3" y="36.2" font-family="Liberation Sans, sans-serif" font-size="4.4" font-weight="bold" fill="#f0f0f0" textLength="8.6" lengthAdjust="spacingAndGlyphs">ALFA</text><path d="M29.6 63.7 H66.6 M30.8 61.8 v3.8 M65.8 61.8 v3.8 M29.2 63.7 l2.4 -2 M29.2 63.7 l2.4 2 M67.2 63.7 l-2.4 -2 M67.2 63.7 l-2.4 2 M47.5 60.4 v3.3" stroke="#d4d4d4" stroke-width="1.15" fill="none"/><path d="M32.5 28.5 H9.5 V40.5 H26 L28 38" fill="none" stroke="#dc7410" stroke-width="1.1"/><path d="M12.5 30.5 H31 L28.6 33.2 H31 V35.5 H25.5 L24.3 38.5 H12.5 Z" fill="none" stroke="#dc7410" stroke-width="1.1"/><path d="M18.0 32.0 L24.0 38.0 M24.0 32.0 L18.0 38.0" stroke="#ff1414" stroke-width="1.2"/></svg></div><div class="cap" style="text-align:left;left:2.5px;letter-spacing:-0.304px;">Videokamera im W...</div></div>
<div class="cell" style="left:500px;top:369px"><div class="im"><svg class="abs" style="left:0;top:0" width="97" height="73" viewBox="0 0 97 73"><path d="M30.6 34 L62 19.4 A34.5 34.5 0 0 1 62 49.6 Z" fill="none" stroke="#ffffff" stroke-width="1.15" stroke-linejoin="round"/><path d="M78.2 12.8 A51.8 51.8 0 0 1 78.2 56.8" fill="none" stroke="#d4d4d4" stroke-width="1.25"/><path d="M75.5 12.6 h4 M75.8 57.6 l3.4 -2 M78.2 59 l1.2 -2.6" stroke="#d4d4d4" stroke-width="1.1" fill="none"/><text x="74.3" y="36.2" font-family="Liberation Sans, sans-serif" font-size="4.4" font-weight="bold" fill="#f0f0f0" textLength="8.6" lengthAdjust="spacingAndGlyphs">ALFA</text><path d="M29.6 63.7 H66.6 M30.8 61.8 v3.8 M65.8 61.8 v3.8 M29.2 63.7 l2.4 -2 M29.2 63.7 l2.4 2 M67.2 63.7 l-2.4 -2 M67.2 63.7 l-2.4 2 M47.5 60.4 v3.3" stroke="#d4d4d4" stroke-width="1.15" fill="none"/><path d="M12.5 30.5 H31 L28.6 33.2 H31 V35.5 H25.5 L24.3 38.5 H12.5 Z" fill="none" stroke="#dc7410" stroke-width="1.1"/><path d="M29 32 V37 M31.5 33 V36" stroke="#dc7410" fill="none"/><path d="M18.0 32.0 L24.0 38.0 M24.0 32.0 L18.0 38.0" stroke="#ff1414" stroke-width="1.2"/></svg></div><div class="cap" style="text-align:left;left:2.5px;letter-spacing:-0.270px;">Videokamera mit V...</div></div>
<div class="cell" style="left:611px;top:369px"><div class="im"><svg class="abs" style="left:0;top:0" width="97" height="73" viewBox="0 0 97 73"><path d="M30.6 34 L62 19.4 A34.5 34.5 0 0 1 62 49.6 Z" fill="none" stroke="#ffffff" stroke-width="1.15" stroke-linejoin="round"/><path d="M78.2 12.8 A51.8 51.8 0 0 1 78.2 56.8" fill="none" stroke="#d4d4d4" stroke-width="1.25"/><path d="M75.5 12.6 h4 M75.8 57.6 l3.4 -2 M78.2 59 l1.2 -2.6" stroke="#d4d4d4" stroke-width="1.1" fill="none"/><path d="M75 35 q1.6 -2.4 3.2 0 t3.2 0" stroke="#d4d4d4" stroke-width="1.1" fill="none"/><path d="M29.6 63.7 H66.6 M30.8 61.8 v3.8 M65.8 61.8 v3.8 M29.2 63.7 l2.4 -2 M29.2 63.7 l2.4 2 M67.2 63.7 l-2.4 -2 M67.2 63.7 l-2.4 2 M47.5 60.4 v3.3" stroke="#d4d4d4" stroke-width="1.15" fill="none"/><path d="M32.5 28.5 H9.5 V40.5 H26 L28 38" fill="none" stroke="#dc7410" stroke-width="1.1"/><path d="M12.5 30.5 H31 L28.6 33.2 H31 V35.5 H25.5 L24.3 38.5 H12.5 Z" fill="none" stroke="#dc7410" stroke-width="1.1"/><path d="M14.5 30.5 V38.5 M16.8 31 V38" stroke="#dc7410" fill="none"/><path d="M17.5 32.0 L23.5 38.0 M23.5 32.0 L17.5 38.0" stroke="#ff1414" stroke-width="1.2"/></svg></div><div class="cap" style="text-align:left;left:2.5px;letter-spacing:-0.162px;">Wärmebildkamera...</div></div>
<div class="cell" style="left:389px;top:468px"><div class="im"><svg class="abs" style="left:0;top:0" width="97" height="73" viewBox="0 0 97 73"><path d="M30.6 34 L62 19.4 A34.5 34.5 0 0 1 62 49.6 Z" fill="none" stroke="#ffffff" stroke-width="1.15" stroke-linejoin="round"/><path d="M78.2 12.8 A51.8 51.8 0 0 1 78.2 56.8" fill="none" stroke="#d4d4d4" stroke-width="1.25"/><path d="M75.5 12.6 h4 M75.8 57.6 l3.4 -2 M78.2 59 l1.2 -2.6" stroke="#d4d4d4" stroke-width="1.1" fill="none"/><text x="74.3" y="36.2" font-family="Liberation Sans, sans-serif" font-size="4.4" font-weight="bold" fill="#f0f0f0" textLength="8.6" lengthAdjust="spacingAndGlyphs">ALFA</text><path d="M29.6 63.7 H66.6 M30.8 61.8 v3.8 M65.8 61.8 v3.8 M29.2 63.7 l2.4 -2 M29.2 63.7 l2.4 2 M67.2 63.7 l-2.4 -2 M67.2 63.7 l-2.4 2 M47.5 60.4 v3.3" stroke="#d4d4d4" stroke-width="1.15" fill="none"/><path d="M12.5 30.5 H31 L28.6 33.2 H31 V35.5 H25.5 L24.3 38.5 H12.5 Z" fill="none" stroke="#dc7410" stroke-width="1.1"/><circle cx="16" cy="34.6" r="2.7" fill="#7a4008" stroke="#dc7410"/><path d="M18.0 32.0 L24.0 38.0 M24.0 32.0 L18.0 38.0" stroke="#ff1414" stroke-width="1.2"/></svg></div><div class="cap" style="text-align:left;left:2.5px;letter-spacing:-0.320px;">Videokamera mit S...</div></div>
<div class="cell" style="left:500px;top:468px"><div class="im"><svg class="abs" style="left:0;top:0" width="97" height="73" viewBox="0 0 97 73"><path d="M30.6 34 L62 19.4 A34.5 34.5 0 0 1 62 49.6 Z" fill="none" stroke="#ffffff" stroke-width="1.15" stroke-linejoin="round"/><path d="M78.2 12.8 A51.8 51.8 0 0 1 78.2 56.8" fill="none" stroke="#d4d4d4" stroke-width="1.25"/><path d="M75.5 12.6 h4 M75.8 57.6 l3.4 -2 M78.2 59 l1.2 -2.6" stroke="#d4d4d4" stroke-width="1.1" fill="none"/><text x="74.3" y="36.2" font-family="Liberation Sans, sans-serif" font-size="4.4" font-weight="bold" fill="#f0f0f0" textLength="8.6" lengthAdjust="spacingAndGlyphs">ALFA</text><path d="M29.6 63.7 H66.6 M30.8 61.8 v3.8 M65.8 61.8 v3.8 M29.2 63.7 l2.4 -2 M29.2 63.7 l2.4 2 M67.2 63.7 l-2.4 -2 M67.2 63.7 l-2.4 2 M47.5 60.4 v3.3" stroke="#d4d4d4" stroke-width="1.15" fill="none"/><path d="M12.5 30.5 H31 L28.6 33.2 H31 V35.5 H25.5 L24.3 38.5 H12.5 Z" fill="none" stroke="#dc7410" stroke-width="1.1"/><path d="M18.0 32.0 L24.0 38.0 M24.0 32.0 L18.0 38.0" stroke="#ff1414" stroke-width="1.2"/></svg></div><div class="cap" style="text-align:left;left:2.5px;letter-spacing:-0.230px;">Videokamera allge...</div></div>
<div class="cell sel" style="left:611px;top:468px"><div class="im"><svg class="abs" style="left:0;top:0" width="97" height="73" viewBox="0 0 97 73"><path d="M30.6 34 L62 19.4 A34.5 34.5 0 0 1 62 49.6 Z" fill="none" stroke="#ffffff" stroke-width="1.15" stroke-linejoin="round"/><path d="M78.2 12.8 A51.8 51.8 0 0 1 78.2 56.8" fill="none" stroke="#d4d4d4" stroke-width="1.25"/><path d="M75.5 12.6 h4 M75.8 57.6 l3.4 -2 M78.2 59 l1.2 -2.6" stroke="#d4d4d4" stroke-width="1.1" fill="none"/><text x="74.3" y="36.2" font-family="Liberation Sans, sans-serif" font-size="4.4" font-weight="bold" fill="#f0f0f0" textLength="8.6" lengthAdjust="spacingAndGlyphs">ALFA</text><path d="M29.6 63.7 H66.6 M30.8 61.8 v3.8 M65.8 61.8 v3.8 M29.2 63.7 l2.4 -2 M29.2 63.7 l2.4 2 M67.2 63.7 l-2.4 -2 M67.2 63.7 l-2.4 2 M47.5 60.4 v3.3" stroke="#d4d4d4" stroke-width="1.15" fill="none"/><path d="M12.5 30.5 H31 L28.6 33.2 H31 V35.5 H25.5 L24.3 38.5 H12.5 Z" fill="none" stroke="#dc7410" stroke-width="1.1"/><circle cx="16" cy="34.6" r="2.7" fill="#7a4008" stroke="#dc7410"/><path d="M18.0 32.0 L24.0 38.0 M24.0 32.0 L18.0 38.0" stroke="#ff1414" stroke-width="1.2"/></svg></div><div class="cap" style="text-align:left;left:2.5px;letter-spacing:-0.162px;">Wärmebildkamera...</div></div>
<div class="cb" style="left:9px;top:618px;"></div><div class="t" style="left:25px;top:617px;letter-spacing:-0.182px;">Sortieren</div><div class="cb" style="left:133px;top:618px;"></div><div class="t" style="left:149px;top:617px;letter-spacing:-0.479px;">Normen</div><div class="cb" style="left:9px;top:639px;"><svg class="abs" style="left:0;top:0" width="11" height="11" viewBox="0 0 11 11"><path d="M1.5 5.5 L4 8.2 L9.5 2.2" fill="none" stroke="#222" stroke-width="1.1"/></svg></div><div class="t" style="left:25px;top:638px;letter-spacing:-0.041px;">Kategorie *Benutzer* anzeigen</div>
<div class="abs" style="left:4px;top:657px;width:503px;height:230px;box-sizing:border-box;border:1px solid;border-color:#fff #a0a0a0 #a0a0a0 #fff"></div><svg class="abs" style="left:0;top:657px" width="510" height="230" viewBox="0 657 510 230">
<path d="M205 760.5 L296.3 717.3 A101 101 0 0 1 296.3 803.7 Z" fill="none" stroke="#000" stroke-width="1.1" stroke-linejoin="round"/>
<path d="M344.5 697.5 A153.5 153.5 0 0 1 343.8 824.5" fill="none" stroke="#a8a8a8" stroke-width="1"/>
<path d="M340 695.5 l9 2.5 M342.5 699.5 l4 -5 M339.5 821 l8 6 M346.5 822 l-5.5 5" stroke="#a8a8a8" stroke-width="1" fill="none"/>
<text x="334.5" y="765.5" font-family="Liberation Sans, sans-serif" font-size="10.5" fill="#a8a8a8" textLength="21" lengthAdjust="spacingAndGlyphs">ALFA</text>
<path d="M201 845.5 H309 M204.5 840.5 V850 M305.5 840.5 V850 M201.5 848.5 l6 -6 M302.5 848.5 l6 -6" stroke="#a0a0a0" stroke-width="1" fill="none"/>
<text x="252.5" y="841" font-family="Liberation Sans, sans-serif" font-size="8.5" fill="#a8a8a8">L</text>
<path d="M150.5 748.5 H204.5 L198.5 757.5 H205 V763.5 H192.5 L187 772.5 H150.5 Z" fill="none" stroke="#d87818" stroke-width="1.1"/>
<circle cx="162" cy="760.5" r="8.8" fill="none" stroke="#d87818" stroke-width="1.1"/>
<text x="162" y="765" text-anchor="middle" font-family="Liberation Sans, sans-serif" font-size="12" fill="#d87818">M</text>
<path d="M170 753 L185 768 M185 753 L170 768" stroke="#ff2020" stroke-width="1.1"/>
</svg><div class="abs" style="left:269px;top:822px;width:25px;height:20px;box-sizing:border-box;border:1px solid;border-color:#fff #a0a0a0 #a0a0a0 #fff;background:#f0f0f0"></div><svg class="abs" style="left:273px;top:825px" width="18" height="16" viewBox="0 0 18 16"><rect x="1.5" y="1.5" width="12" height="9" fill="#f2f2f2" stroke="#0a0af0" stroke-width="1.1"/><path d="M6.4 3.8 L11.6 9 M11.6 3.8 L6.4 9" stroke="#f01818" stroke-width="1.2"/><path d="M9.5 6.3 V13.6 L11.2 12 L12.7 14.8 L14.2 14.1 L12.9 11.4 H15.6 Z" fill="#fff" stroke="#000" stroke-width="1" stroke-linejoin="round"/></svg><div class="t" style="left:4px;top:870px;width:503px;text-align:center;letter-spacing:-0.225px;">Wärmebildkamera, schwenkbar</div>
<div class="grp" style="left:512px;top:627px;width:147px;height:86px"><span style="letter-spacing:-0.419px;">Winkel</span></div><div class="grp" style="left:512px;top:727px;width:147px;height:106px"><span style="letter-spacing:-0.190px;">Ansicht</span></div><div class="abs" style="left:519px;top:644px;width:13px;height:13px;box-sizing:border-box;border:1px solid #333;border-radius:50%;background:#fff"></div><div class="t" style="left:535px;top:642px;letter-spacing:-0.364px;">Winkel manuell</div><div class="abs" style="left:519px;top:678px;width:13px;height:13px;box-sizing:border-box;border:1px solid #333;border-radius:50%;background:#fff"><div class="abs" style="left:2px;top:2px;width:7px;height:7px;border-radius:50%;background:#333"></div></div><div class="t" style="left:535px;top:676px;letter-spacing:-0.330px;">Winkel:</div><div class="edit" style="left:609px;top:679px;width:42px;height:23px"></div><div class="t" style="left:615px;top:681px;">0</div><svg class="abs" style="left:636px;top:648px" width="14" height="18" viewBox="0 0 14 18"><path d="M0.8 0.7 L6.2 6.1 M6.2 0.7 L0.8 6.1" stroke="#b41414" stroke-width="1"/><path d="M4 3.3 V14.6 L6.6 12.2 L8.6 16.2 L10.8 15.3 L8.9 11.5 H12.6 Z" fill="#fff" stroke="#000" stroke-width="1" stroke-linejoin="round"/></svg><div class="cb" style="left:521px;top:747px;"></div><div class="t" style="left:537px;top:745px;letter-spacing:-0.362px;">Spiegeln um Achse Y</div><div class="cb" style="left:521px;top:774px;"></div><div class="t" style="left:537px;top:773px;letter-spacing:-0.373px;">Spiegeln um Achse X</div><div class="t" style="left:514px;top:860px;letter-spacing:-0.200px;">Aktuelle Einheit: Millimeter</div>
<div class="t" style="left:669px;top:641px;letter-spacing:-0.264px;">Maßstab:</div><div class="edit" style="left:753px;top:639px;width:31px;height:20px"></div><div class="t" style="left:759px;top:641px;letter-spacing:-0.120px;">200</div><svg class="abs" style="left:797px;top:643px" width="18" height="16" viewBox="0 0 18 16"><rect x="1.5" y="1.5" width="12" height="9" fill="#f2f2f2" stroke="#0a0af0" stroke-width="1.1"/><path d="M6.4 3.8 L11.6 9 M11.6 3.8 L6.4 9" stroke="#f01818" stroke-width="1.2"/><path d="M9.5 6.3 V13.6 L11.2 12 L12.7 14.8 L14.2 14.1 L12.9 11.4 H15.6 Z" fill="#fff" stroke="#000" stroke-width="1" stroke-linejoin="round"/></svg><div class="t" style="left:669px;top:744px;letter-spacing:-0.400px;">Kennung</div><div class="edit" style="left:665px;top:763px;width:142px;height:21px"></div><div class="cb" style="left:665px;top:795px;"></div><div class="t" style="left:681px;top:794px;letter-spacing:-0.321px;">mit Bereich</div><div class="cb" style="left:665px;top:818px;"></div><div class="t" style="left:681px;top:817px;letter-spacing:-0.131px;">Bereich gefüllt</div>
<div class="cb" style="left:830px;top:629px;"><svg class="abs" style="left:0;top:0" width="11" height="11" viewBox="0 0 11 11"><path d="M1.5 5.5 L4 8.2 L9.5 2.2" fill="none" stroke="#222" stroke-width="1.1"/></svg></div><div class="t" style="left:846px;top:628px;letter-spacing:-0.406px;">System</div><div class="abs" style="left:830px;top:649px;width:227px;height:21px;box-sizing:border-box;border:1px solid;border-color:#a0a0a0 #e3e3e3 #e3e3e3 #a0a0a0;background:#fff;box-shadow:inset 1px 1px 0 #696969"></div><div class="abs" style="left:834px;top:653px;width:14px;height:14px;box-sizing:border-box;border:1px solid #000;background:#fff"></div><div class="t" style="left:850px;top:652px;letter-spacing:-0.750px;">L1</div><div class="abs" style="left:1042px;top:652px;width:14px;height:15px;background:linear-gradient(#c6d8f4,#a9c2ec);border-radius:1px"></div><svg class="abs" style="left:1044px;top:656px" width="10" height="7" viewBox="0 0 10 7"><path d="M1 1 L5 5 L9 1" fill="none" stroke="#2a3c6a" stroke-width="2"/></svg><div class="cb" style="left:828px;top:696px;"></div><div class="t" style="left:844px;top:695px;letter-spacing:-0.216px;">Letzte Eingaben merken</div><div class="t" style="left:828px;top:731px;letter-spacing:-0.374px;">Bezeichnung</div><div class="abs" style="left:907px;top:724px;width:150px;height:21px;box-sizing:border-box;border:1px solid #bfbfbf;background:#ccc"></div><svg class="abs" style="left:1042px;top:731px" width="11" height="7" viewBox="0 0 11 7"><path d="M1 1 L5.5 5.5 L10 1" fill="none" stroke="#b4b4b4" stroke-width="1.1"/></svg><div class="t" style="left:828px;top:765px;letter-spacing:-0.152px;">Artikel</div><div class="edit" style="left:907px;top:761px;width:150px;height:21px"></div><div class="t" style="left:828px;top:796px;letter-spacing:-0.183px;">Hersteller</div><div class="edit" style="left:907px;top:792px;width:150px;height:21px"></div><svg class="abs" style="left:1042px;top:798px" width="11" height="7" viewBox="0 0 11 7"><path d="M1 1 L5.5 5.5 L10 1" fill="none" stroke="#444" stroke-width="1.1"/></svg><div class="cb" style="left:911px;top:830px;"></div><div class="t" style="left:927px;top:829px;letter-spacing:-0.254px;">Mehrmals einfügen</div><div class="abs" style="left:903px;top:848px;width:121px;height:34px;box-sizing:border-box;border:1px solid #000;background:#f0f0f0;box-shadow:inset 1px 1px 0 #fff,inset -1px -1px 0 #fff"></div><svg class="abs" style="left:912px;top:855px" width="22" height="23" viewBox="0 0 22 23"><path d="M3.6 10.9 L7.8 17.8 L15.8 3.4" fill="none" stroke="#0a2a0a" stroke-width="4.8" stroke-linejoin="miter" stroke-linecap="butt" stroke-dasharray="1 0.6"/><path d="M3.6 10.9 L7.8 17.8 L15.8 3.4" fill="none" stroke="#008c00" stroke-width="3.2" stroke-linejoin="miter" stroke-linecap="butt"/><path d="M3.1 10.2 L4.8 12.4 M15.2 4.6 L16.6 2.8" stroke="#a8a8a8" stroke-width="2.2"/></svg><div class="t" style="left:955px;top:856px;letter-spacing:-0.273px;">Einfügen</div><div class="abs" style="left:1026px;top:848px;width:32px;height:34px;box-sizing:border-box;border:1px solid;border-color:#fff #a0a0a0 #a0a0a0 #fff;background:#f0f0f0"><i class="abs" style="left:14px;top:10px;width:3px;height:3px;background:#000"></i><i class="abs" style="left:14px;top:16px;width:3px;height:3px;background:#000"></i><i class="abs" style="left:14px;top:22px;width:3px;height:3px;background:#000"></i></div><i class="abs" style="left:1062px;top:882px;width:2px;height:2px;background:#bfbfbf"></i><i class="abs" style="left:1059px;top:885px;width:2px;height:2px;background:#bfbfbf"></i><i class="abs" style="left:1062px;top:885px;width:2px;height:2px;background:#bfbfbf"></i><i class="abs" style="left:1056px;top:888px;width:2px;height:2px;background:#bfbfbf"></i><i class="abs" style="left:1059px;top:888px;width:2px;height:2px;background:#bfbfbf"></i><i class="abs" style="left:1062px;top:888px;width:2px;height:2px;background:#bfbfbf"></i><div id="frame"></div>
</body></html>
